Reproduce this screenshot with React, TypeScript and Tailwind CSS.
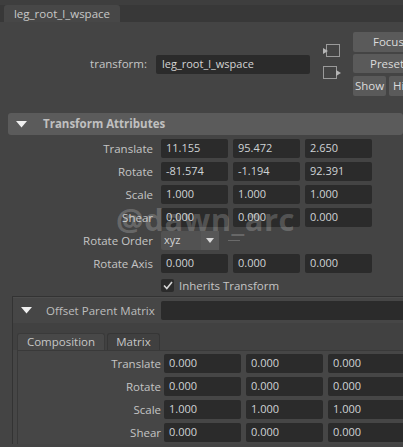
import React from "react";

const font = "font-['Open_Sans','Noto_Sans',sans-serif]";

function Triangle() {
  return (
    <svg width="11" height="7" viewBox="0 0 11 7" className="shrink-0">
      <polygon points="0,0 11,0 5.5,6.5" fill="#f0f0f0" />
    </svg>
  );
}

function Field({ value, w }: { value: string; w: string }) {
  return (
    <div className={`${w} shrink-0 h-[19px] bg-[#2b2b2b] rounded-[2px] pl-[5px] flex items-center text-[#cfd3d6] text-[11px]`}>
      {value}
    </div>
  );
}

function AttrRow({ label, values }: { label: string; values: string[] }) {
  return (
    <div className="h-[23px] flex items-center">
      <div className="w-[153px] shrink-0 text-right text-[#c4c4c4] text-[11.5px]">{label}</div>
      <div className="ml-[8px] flex gap-[5px]">
        {values.map((v, i) => (
          <Field key={i} value={v} w="w-[67px]" />
        ))}
      </div>
    </div>
  );
}

function InnerRow({ label, values }: { label: string; values: string[] }) {
  return (
    <div className="h-[23px] flex items-center">
      <div className="w-[143px] shrink-0 text-right text-[#c4c4c4] text-[11.5px]">{label}</div>
      <div className="ml-[3px] flex gap-[5px]">
        {values.map((v, i) => (
          <Field key={i} value={v} w="w-[77px]" />
        ))}
      </div>
    </div>
  );
}

export default function App() {
  return (
    <div className={`${font} relative w-[403px] h-[447px] overflow-hidden bg-[#444444] select-none`}>
      {/* Editor tab strip */}
      <div className="h-[22px] bg-[#383838] border-t-[5px] border-[#3e3e3e] flex items-end">
        <div className="ml-[4px] w-[116px] h-[17px] bg-[#474747] rounded-t-[3px] flex items-center justify-center text-[#c8c8c8] text-[11.5px]">
          leg_root_l_wspace
        </div>
      </div>

      {/* Node name row */}
      <div className="h-[91px] flex pt-[10px]">
        <div className="w-[310px] shrink-0 h-[64px] flex items-center justify-end">
          <span className="text-[#c6c6c6] text-[11.5px] mr-[9px]">transform:</span>
          <div className="w-[154px] shrink-0 h-[19px] bg-[#2b2b2b] rounded-[2px] pl-[6px] flex items-center text-[#d4d4d4] text-[11px]">
            leg_root_l_wspace
          </div>
        </div>
        <div className="ml-[13px] w-[19px] shrink-0 flex flex-col pt-[12px] gap-[8px]">
          <svg width="18" height="14" viewBox="0 0 18 14">
            <rect x="3.5" y="0.5" width="13" height="12" fill="none" stroke="#9a9a9a" />
            <polygon points="0,4 5,7 0,10" fill="#b5b5b5" />
          </svg>
          <svg width="19" height="14" viewBox="0 0 19 14">
            <rect x="0.5" y="0.5" width="13" height="12" fill="none" stroke="#9a9a9a" />
            <polygon points="13,4 18,7 13,10" fill="#b5b5b5" />
          </svg>
        </div>
        <div className="ml-[11px] w-[76px] shrink-0 flex flex-col text-[#dcdcdc] text-[11.5px]">
          <div className="h-[20px] bg-[#5a5a5a] rounded-[2px] flex items-center pl-[20px]">Focus</div>
          <div className="mt-[2px] h-[19px] bg-[#5a5a5a] rounded-[2px] flex items-center pl-[17px]">Presets</div>
          <div className="mt-[3px] flex gap-[3px]">
            <div className="w-[33px] shrink-0 h-[20px] bg-[#5a5a5a] rounded-[2px] flex items-center pl-[2px]">Show</div>
            <div className="w-[40px] shrink-0 h-[20px] bg-[#5a5a5a] rounded-[2px] flex items-center pl-[4px]">Hide</div>
          </div>
        </div>
      </div>

      {/* Transform Attributes frame */}
      <div className="ml-[8px] h-[22px] bg-[#5b5b5b] rounded-[3px] flex items-center pl-[8px]">
        <Triangle />
        <span className="ml-[16px] text-[#c0c0c0] text-[11.5px] font-bold">Transform Attributes</span>
      </div>
      <div className="pt-[2px]">
        <AttrRow label="Translate" values={["11.155", "95.472", "2.650"]} />
        <AttrRow label="Rotate" values={["-81.574", "-1.194", "92.391"]} />
        <AttrRow label="Scale" values={["1.000", "1.000", "1.000"]} />
        <AttrRow label="Shear" values={["0.000", "0.000", "0.000"]} />
        <div className="h-[23px] flex items-center">
          <div className="w-[153px] shrink-0 text-right text-[#c4c4c4] text-[11.5px]">Rotate Order</div>
          <div className="ml-[8px] w-[58px] h-[19px] bg-[#525252] rounded-[2px] flex items-center text-[#d4d4d4] text-[11px]">
            <span className="pl-[3px] w-[40px]">xyz</span>
            <div className="w-[18px] h-full bg-[#575757] flex items-center justify-center">
              <svg width="8" height="5" viewBox="0 0 8 5">
                <polygon points="0,0 8,0 4,5" fill="#d8d8d8" />
              </svg>
            </div>
          </div>
          <div className="ml-[9px] w-[12px] h-[1px] bg-[#6a6a6a]" />
        </div>
        <AttrRow label="Rotate Axis" values={["0.000", "0.000", "0.000"]} />
        <div className="h-[21px] flex items-center">
          <div className="ml-[161px] w-[13px] h-[13px] bg-[#2b2b2b] rounded-[2px] flex items-center justify-center">
            <svg width="10" height="9" viewBox="0 0 10 9">
              <polyline points="1,4.5 3.8,7.5 9,1" fill="none" stroke="#d6d6d6" strokeWidth="1.6" />
            </svg>
          </div>
          <span className="ml-[5px] text-[#c4c4c4] text-[11.5px]">Inherits Transform</span>
        </div>
      </div>

      {/* Offset Parent Matrix frame */}
      <div className="ml-[12px] border-t border-l border-[#333333] bg-[#464646]">
        <div className="h-[26px] flex items-center border-t border-[#4d4d4d]">
          <div className="ml-[8px]">
            <Triangle />
          </div>
          <span className="ml-[14px] text-[#bdbdbd] text-[11.5px]">Offset Parent Matrix</span>
          <div className="ml-[6px] flex-1 h-[19px] bg-[#2b2b2b] rounded-l-[2px]" />
        </div>
        <div className="h-[9px] bg-[#414141]" />
        <div className="pl-[4px] bg-[#414141] flex items-end h-[18px]">
          <div className="w-[88px] h-[17px] bg-[#484848] rounded-t-[3px] border-t border-x border-[#3a3a3a] flex items-center justify-center text-[#c6c6c6] text-[11.5px]">
            Composition
          </div>
          <div className="ml-[2px] w-[53px] h-[17px] bg-[#404040] rounded-t-[3px] border-t border-x border-[#363636] flex items-center justify-center text-[#c6c6c6] text-[11.5px]">
            Matrix
          </div>
        </div>
        <div className="ml-[4px] border-l border-t border-[#393939] bg-[#464646] pt-[1px]">
          <InnerRow label="Translate" values={["0.000", "0.000", "0.000"]} />
          <InnerRow label="Rotate" values={["0.000", "0.000", "0.000"]} />
          <InnerRow label="Scale" values={["1.000", "1.000", "1.000"]} />
          <InnerRow label="Shear" values={["0.000", "0.000", "0.000"]} />
        </div>
      </div>

      {/* watermark */}
      <div className="absolute left-[116px] top-[196px] text-[31px] font-bold text-white/20 font-['Open_Sans',sans-serif] tracking-[0.5px] pointer-events-none">
        @dawn_arc
      </div>
    </div>
  );
}
